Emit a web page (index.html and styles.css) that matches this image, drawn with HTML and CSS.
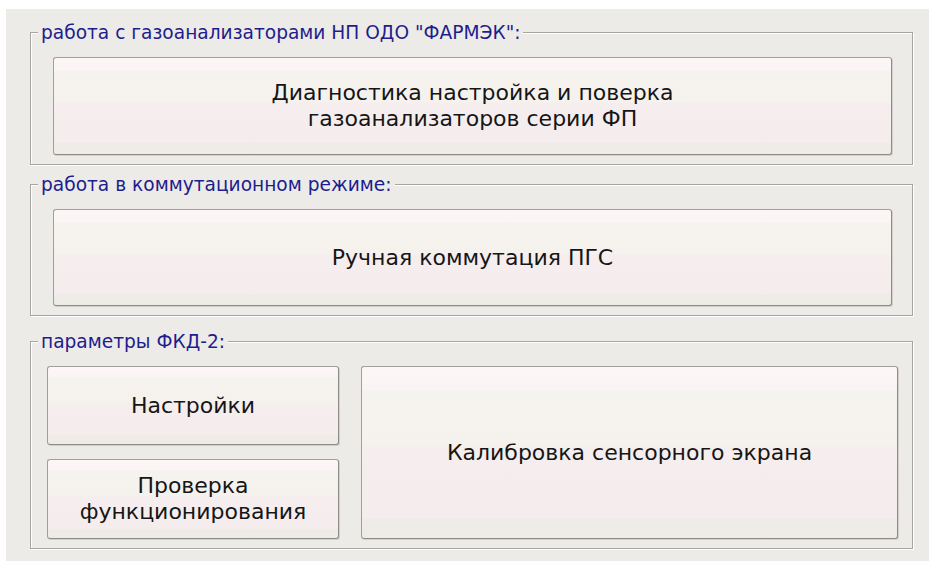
FILE: index.html
```html
<!DOCTYPE html>
<html lang="ru">
<head>
<meta charset="utf-8">
<title>ФКД-2</title>
<link rel="stylesheet" href="styles.css">
</head>
<body>
<div class="window">
  <fieldset class="group group-wide">
    <legend>работа с газоанализаторами НП ОДО "ФАРМЭК":</legend>
    <button class="btn btn-tall">Диагностика настройка и поверка<br>газоанализаторов серии ФП</button>
  </fieldset>
  <fieldset class="group group-wide">
    <legend>работа в коммутационном режиме:</legend>
    <button class="btn btn-tall2">Ручная коммутация ПГС</button>
  </fieldset>
  <fieldset class="group group-params">
    <legend>параметры ФКД-2:</legend>
    <div class="params">
      <div class="col">
        <button class="btn btn-small">Настройки</button>
        <button class="btn btn-small2">Проверка<br>функционирования</button>
      </div>
      <button class="btn btn-big">Калибровка сенсорного экрана</button>
    </div>
  </fieldset>
</div>
</body>
</html>
```

FILE: styles.css
```css
html, body {
  margin: 0;
  padding: 0;
  background: #ffffff;
}

body {
  padding: 9px 0 0 6px;
  font-family: "DejaVu Sans", sans-serif;
}

.window {
  background: #edebe7;
  width: 923px;
  height: 552px;
  box-sizing: border-box;
  padding: 13px 16px 0 24px;
  display: flex;
  flex-direction: column;
  gap: 9px;
}

.group {
  margin: 0;
  min-width: 0;
  border: 1px solid #a8a5a0;
  box-shadow: inset 1px 1px 0 #ffffff, 1px 1px 0 #ffffff;
  display: block;
}

.group legend {
  font-size: 18.6px;
  line-height: 21px;
  color: #1d1d8e;
  padding: 0 3px;
  background: #edebe7;
}

.group-wide {
  padding: 14px 20px 9px 22px;
}

.group-wide legend {
  margin-left: -15px;
}

.group-params {
  padding: 14px 14px 9px 16px;
  margin-top: 6px;
}

.group-params legend {
  margin-left: -9px;
}

.btn {
  display: block;
  width: 100%;
  margin: 0;
  padding: 0;
  font-family: "DejaVu Sans", sans-serif;
  font-size: 22px;
  line-height: 26px;
  color: #161616;
  text-align: center;
  border: 1px solid #a29f9a;
  border-right-color: #8f8c87;
  border-bottom-color: #8f8c87;
  border-radius: 3px;
  box-shadow: 1px 1px 0 #d3d0cb;
  background: linear-gradient(to bottom,
    #fdf6f6 0%, #fbf4f4 13%,
    #f5f3ef 14%, #f5f2ee 46%,
    #f6eeee 47%, #f5eded 88%,
    #efebe7 89%, #eeebe7 100%);
}

.btn-tall {
  height: 98px;
}

.btn-tall2 {
  height: 97px;
}

.params {
  display: flex;
  gap: 22px;
}

.col {
  width: 292px;
  flex: none;
  display: flex;
  flex-direction: column;
  gap: 14px;
}

.btn-small {
  height: 79px;
}

.btn-small2 {
  height: 80px;
}

.btn-big {
  flex: 1;
  width: auto;
  height: 173px;
}
```
